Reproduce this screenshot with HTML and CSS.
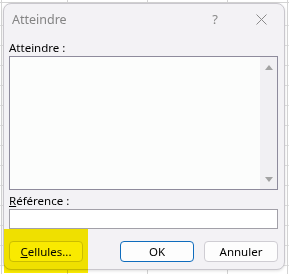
FILE: index.html
```html
<!DOCTYPE html>
<html lang="fr">
<head>
    <meta charset="UTF-8">
    <title>Atteindre</title>
    <link rel="stylesheet" href="styles.css">
</head>
<body>
    <div class="dialog">
        <div class="titlebar">
            <span class="title">Atteindre</span>
            <span class="help">?</span>
            <svg class="close" width="11" height="11" viewBox="0 0 11 11">
                <path d="M0.5 0.5 L10.5 10.5 M10.5 0.5 L0.5 10.5" stroke="#8a8a8a" stroke-width="1" fill="none"/>
            </svg>
        </div>

        <div class="label">Atteindre :</div>
        <div class="listbox">
            <div class="list-area"></div>
            <div class="scrollbar">
                <span class="arrow up"></span>
                <span class="arrow down"></span>
            </div>
        </div>

        <div class="label ref-label"><u>R</u>éférence :</div>
        <div class="textbox"></div>

        <div class="buttons">
            <button class="btn"><u>C</u>ellules...</button>
            <div class="spacer"></div>
            <button class="btn primary">OK</button>
            <button class="btn">Annuler</button>
        </div>
    </div>
    <div class="highlight"></div>
</body>
</html>
```

FILE: styles.css
```css
html, body {
    margin: 0;
    padding: 0;
}
body {
    width: 289px;
    height: 274px;
    overflow: hidden;
    position: relative;
    font-family: "Noto Sans", "Open Sans", sans-serif;
    font-size: 11.5px;
    color: #000;
    background-color: #fff;
    background-image:
        linear-gradient(to right, transparent 1px, #d4d4d4 1px, #d4d4d4 2px, transparent 2px),
        linear-gradient(to right, transparent 67px, #d4d4d4 67px, #d4d4d4 68px, transparent 68px),
        linear-gradient(to right, transparent 147px, #d4d4d4 147px, #d4d4d4 148px, transparent 148px),
        linear-gradient(to right, transparent 227px, #d4d4d4 227px, #d4d4d4 228px, transparent 228px),
        linear-gradient(to right, transparent 287px, #d4d4d4 287px, #d4d4d4 288px, transparent 288px),
        linear-gradient(to bottom, transparent 2px, #d4d4d4 2px, #d4d4d4 3px, transparent 3px),
        repeating-linear-gradient(to bottom, transparent 0, transparent 19px, #e1e1e1 19px, #e1e1e1 20px);
    background-position: 0 0, 0 0, 0 0, 0 0, 0 0, 0 0, 0 6px;
}
.dialog {
    box-sizing: border-box;
    width: 282px;
    height: 267px;
    margin: 3px 0 0 3px;
    padding: 0 6px 0 5px;
    background: #f3f2f5;
    border: 1px solid #c9c7cd;
    border-radius: 8px;
    box-shadow: 0 1px 3px rgba(0, 0, 0, 0.12);
    display: flex;
    flex-direction: column;
}
.titlebar {
    height: 30px;
    display: flex;
    align-items: center;
    padding-left: 3px;
}
.title {
    font-size: 12.5px;
    color: #848484;
    flex: 1;
}
.help {
    font-size: 13px;
    color: #8a8a8a;
    margin-right: 38px;
}
.close {
    margin-right: 11px;
}
.label {
    margin-top: 5px;
    height: 17px;
    line-height: 17px;
}
.ref-label {
    margin-top: 2px;
}
.listbox {
    box-sizing: border-box;
    height: 134px;
    border: 1px solid #8e8b9c;
    display: flex;
    background: #fcfdfc;
}
.list-area {
    flex: 1;
}
.scrollbar {
    width: 17px;
    background: #f1f0f3;
    display: flex;
    flex-direction: column;
    justify-content: space-between;
    align-items: center;
    padding: 8px 0 7px;
}
.arrow {
    width: 0;
    height: 0;
    border-left: 4px solid transparent;
    border-right: 4px solid transparent;
}
.arrow.up {
    border-bottom: 5px solid #a3a3a3;
}
.arrow.down {
    border-top: 5px solid #a3a3a3;
}
.textbox {
    box-sizing: border-box;
    height: 20px;
    border: 1px solid #a2a0a8;
    background: #fff;
}
.buttons {
    display: flex;
    margin-top: 12px;
}
.spacer {
    flex: 1;
}
.btn {
    box-sizing: border-box;
    width: 74px;
    height: 21px;
    font-family: inherit;
    font-size: 11.5px;
    color: #000;
    background: #fdfdfd;
    border: 1px solid #cfcdd3;
    border-radius: 4px;
    padding: 0;
    margin-left: 10px;
}
.btn:first-child {
    margin-left: 0;
}
.btn.primary {
    border-color: #0f6cbd;
}
.highlight {
    position: absolute;
    left: 4px;
    top: 229px;
    width: 84px;
    height: 44px;
    background: #fbec00;
    mix-blend-mode: multiply;
}
```
